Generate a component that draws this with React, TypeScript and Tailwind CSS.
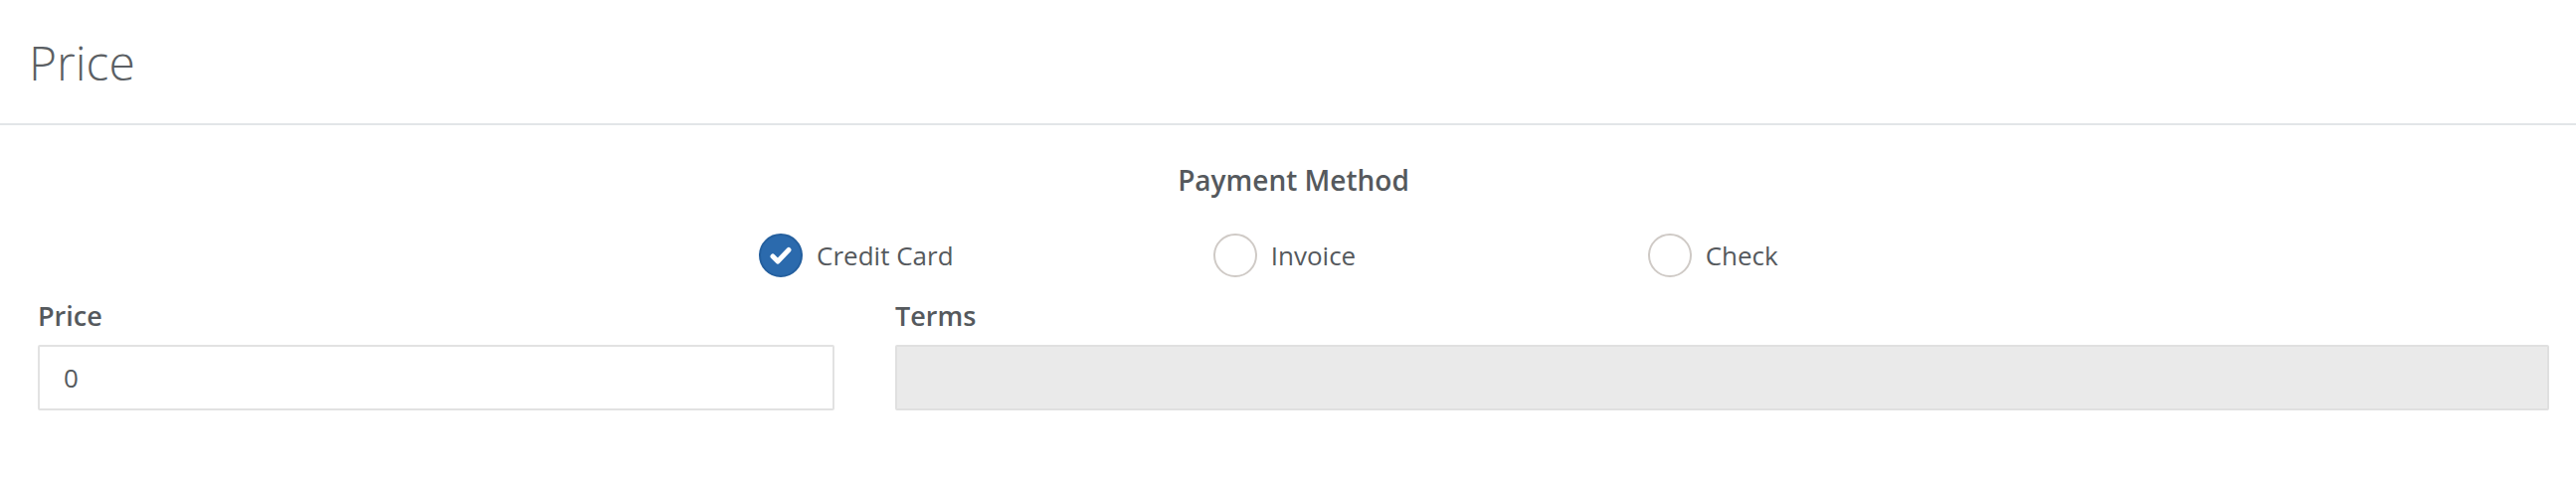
import React from "react";

function Radio({ label, checked }: { label: string; checked?: boolean }) {
  return (
    <div className="flex items-center gap-[14px]">
      {checked ? (
        <span className="relative h-[44px] w-[44px] rounded-full border-2 border-[#245f9e] bg-[#2b6aad]">
          <svg className="absolute -left-[2px] -top-[2px]" width="44" height="44" viewBox="0 0 44 44" fill="none">
            <path d="M14 23 L19 28 L30 16.5" stroke="#ffffff" strokeWidth="5" strokeLinecap="round" strokeLinejoin="round" />
          </svg>
        </span>
      ) : (
        <span className="h-[44px] w-[44px] rounded-full border-2 border-[#cfcac6] bg-white" />
      )}
      <span className="text-[26px] leading-[26px] text-[#55595d]">{label}</span>
    </div>
  );
}

export default function App() {
  return (
    <div
      className="h-[480px] w-[2590px] bg-white text-[#55595d]"
      style={{ fontFamily: '"Open Sans", "Noto Sans", sans-serif' }}
    >
      <div className="h-[126px] border-b-2 border-[#e2e5e8] pl-[29px] pt-[39px]">
        <h1 className="text-[48px] font-light leading-[48px] text-[#5b5f64]">Price</h1>
      </div>
      <div className="pl-[38px] pr-[27px]">
        <div className="mt-[41px] text-center text-[28px] font-semibold leading-[28px]">Payment Method</div>
        <div className="mt-[40px] flex justify-center pr-[18px]">
          <div className="grid grid-cols-3 w-[1292px]">
            <div className="flex justify-center">
              <Radio label="Credit Card" checked />
            </div>
            <div className="flex justify-center">
              <Radio label="Invoice" />
            </div>
            <div className="flex justify-center">
              <Radio label="Check" />
            </div>
          </div>
        </div>
        <div className="mt-[26px] flex gap-[61px]">
          <div className="w-[801px]">
            <label className="block text-[27px] font-semibold leading-[26px]">Price</label>
            <div className="mt-[16px] flex h-[66px] items-center rounded-[2px] border-2 border-[#e2e2e2] bg-white px-[24px]">
              <span className="text-[26px] leading-[26px] text-[#55595d]">0</span>
            </div>
          </div>
          <div className="flex-1">
            <label className="block text-[27px] font-semibold leading-[26px]">Terms</label>
            <div className="mt-[16px] h-[66px] rounded-[2px] border-2 border-[#e0e0e0] bg-[#eaeaea]" />
          </div>
        </div>
      </div>
    </div>
  );
}
